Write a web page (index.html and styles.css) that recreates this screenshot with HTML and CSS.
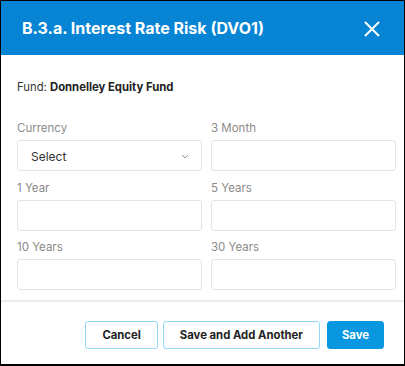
FILE: index.html
```html
<!DOCTYPE html>
<html lang="en">
  <head>
    <meta charset="UTF-8" />
    <meta name="viewport" content="width=device-width, initial-scale=1.0" />
    <title>Interest Rate Risk</title>

    <!-- CSS -->
    <link rel="stylesheet" href="styles.css">
  </head>
  <body>
    <div class="modal">
      <div class="modal-header">
        <h1>B.3.a. Interest Rate Risk (DVO1)</h1>
        <button class="close" aria-label="Close">
          <svg width="16" height="16" viewBox="0 0 16 16">
            <path d="M1 1 L15 15 M15 1 L1 15" stroke="#fff" stroke-width="2" fill="none" />
          </svg>
        </button>
      </div>

      <div class="modal-body">
        <p class="fund">Fund: <b>Donnelley Equity Fund</b></p>

        <div class="fields">
          <div class="field">
            <label>Currency</label>
            <div class="input select">
              <span>Select</span>
              <svg width="8" height="5" viewBox="0 0 8 5">
                <path d="M1 1 L4 4 L7 1" stroke="#999" stroke-width="1" fill="none" />
              </svg>
            </div>
          </div>
          <div class="field">
            <label>3 Month</label>
            <div class="input"></div>
          </div>
          <div class="field">
            <label>1 Year</label>
            <div class="input"></div>
          </div>
          <div class="field">
            <label>5 Years</label>
            <div class="input"></div>
          </div>
          <div class="field">
            <label>10 Years</label>
            <div class="input"></div>
          </div>
          <div class="field">
            <label>30 Years</label>
            <div class="input"></div>
          </div>
        </div>
      </div>

      <div class="modal-footer">
        <button class="btn btn-outline">Cancel</button>
        <button class="btn btn-outline">Save and Add Another</button>
        <button class="btn btn-primary">Save</button>
      </div>
    </div>
  </body>
</html>
```

FILE: styles.css
```css
* {
  box-sizing: border-box;
}

body {
  margin: 0;
  font-family: Inter, "Noto Sans", sans-serif;
}

.modal {
  width: 405px;
  height: 366px;
  border: 1px solid #000;
  border-bottom-width: 2px;
  display: flex;
  flex-direction: column;
  background: #fff;
}

.modal-header {
  height: 54px;
  background-color: #0784d4;
  display: flex;
  align-items: center;
  justify-content: space-between;
  padding: 0 24px 0 21px;
}

.modal-header h1 {
  margin: 0;
  color: #fff;
  font-size: 16px;
  font-weight: 700;
}

.close {
  background: none;
  border: none;
  padding: 0;
  display: flex;
  margin-top: 1px;
}

.modal-body {
  flex: 1;
  padding: 24px 8px 0 16px;
}

.fund {
  margin: 0 0 25px;
  font-size: 11.3px;
  line-height: 16px;
  color: #333;
}

.fund b {
  color: #222;
}

.fields {
  display: grid;
  grid-template-columns: 1fr 1fr;
  column-gap: 9px;
  row-gap: 8.5px;
}

.field label {
  display: block;
  font-size: 11.5px;
  line-height: 16px;
  color: #8a8a8a;
  margin-bottom: 4px;
}

.input {
  height: 31px;
  border: 1px solid #e4e4e4;
  border-radius: 3px;
}

.select {
  display: flex;
  align-items: center;
  justify-content: space-between;
  padding: 1px 12px 0 13px;
  font-size: 12px;
  color: #333;
}

.modal-footer {
  border-top: 2px solid #ebebeb;
  display: flex;
  justify-content: flex-end;
  gap: 5px;
  padding: 19px 20px 15px 0;
}

.btn {
  height: 28px;
  padding: 0 16px;
  border-radius: 3px;
  font-family: inherit;
  font-size: 11.3px;
  font-weight: 700;
  color: #222;
}

.btn-outline {
  background: #fff;
  border: 1px solid #93d8f6;
}

.btn-primary {
  background-color: #0998e0;
  border: 1px solid #0998e0;
  color: #fff;
  padding: 0 14px;
  margin-left: 2px;
}
```
